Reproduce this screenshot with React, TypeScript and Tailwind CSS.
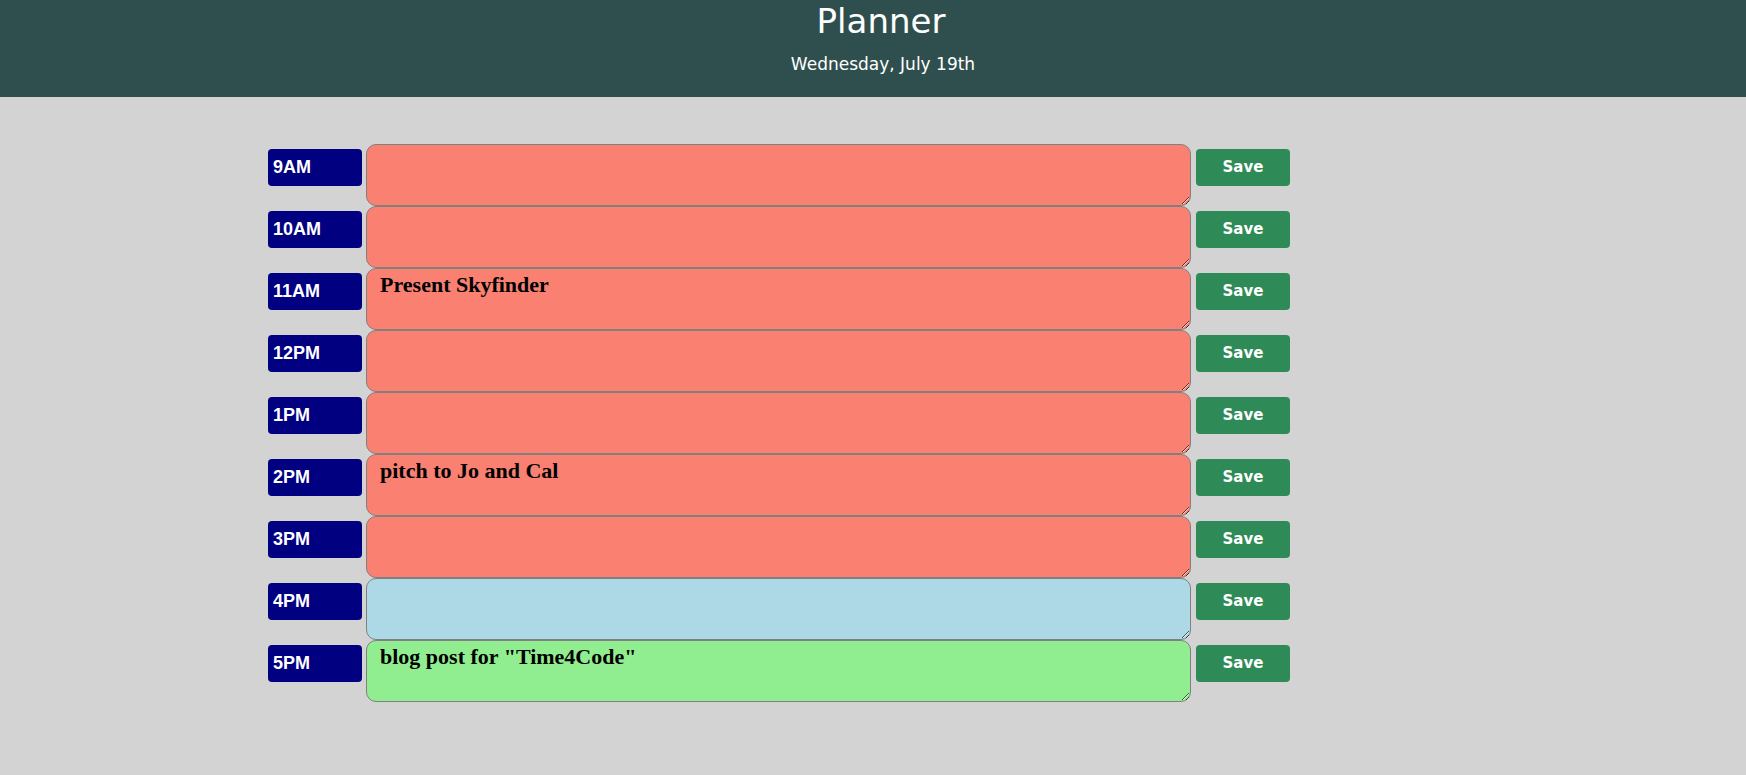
const hours = [
  { label: "9AM", text: "", tense: "past" },
  { label: "10AM", text: "", tense: "past" },
  { label: "11AM", text: "Present Skyfinder", tense: "past" },
  { label: "12PM", text: "", tense: "past" },
  { label: "1PM", text: "", tense: "past" },
  { label: "2PM", text: "pitch to Jo and Cal", tense: "past" },
  { label: "3PM", text: "", tense: "past" },
  { label: "4PM", text: "", tense: "present" },
  { label: "5PM", text: 'blog post for "Time4Code"', tense: "future" },
];

const tenseBg: Record<string, string> = {
  past: "bg-[#fa8072]",
  present: "bg-[#add8e6]",
  future: "bg-[#90ee90]",
};

export default function App() {
  return (
    <div className="min-h-[775px] bg-[#d3d3d3]">
      <header className="flex h-[97px] flex-col items-center bg-[#2f4f4f] pt-[1px] text-white [font-family:'DejaVu_Sans',sans-serif]">
        <h1 className="pl-[16px] text-[34px] leading-[41px]">Planner</h1>
        <p className="mt-[10px] pl-[20px] text-[17px] leading-[24px]">Wednesday, July 19th</p>
      </header>

      <div className="flex flex-col pl-[268px] pt-[47px]">
        {hours.map((h) => (
          <div key={h.label} className="flex items-start">
            <div className="mt-[5px] h-[37px] w-[94px] rounded-[4px] bg-[#000080] pl-[5px] pt-[5px] text-[18px] font-bold leading-[27px] text-white [font-family:'Liberation_Sans',Arial,sans-serif]">
              {h.label}
            </div>
            <textarea
              defaultValue={h.text}
              spellCheck={false}
              className={`ml-[4px] block h-[62px] w-[825px] rounded-[10px] border border-[#808080] ${tenseBg[h.tense]} pl-[13px] pt-[3px] text-[22px] font-bold leading-[25px] text-black outline-none [font-family:'Liberation_Serif',Georgia,serif]`}
            />
            <button
              type="button"
              className="ml-[5px] mt-[5px] h-[37px] w-[94px] rounded-[4px] bg-[#2e8b57] text-[15px] font-bold text-white [font-family:'DejaVu_Sans',sans-serif]"
            >
              Save
            </button>
          </div>
        ))}
      </div>
    </div>
  );
}
